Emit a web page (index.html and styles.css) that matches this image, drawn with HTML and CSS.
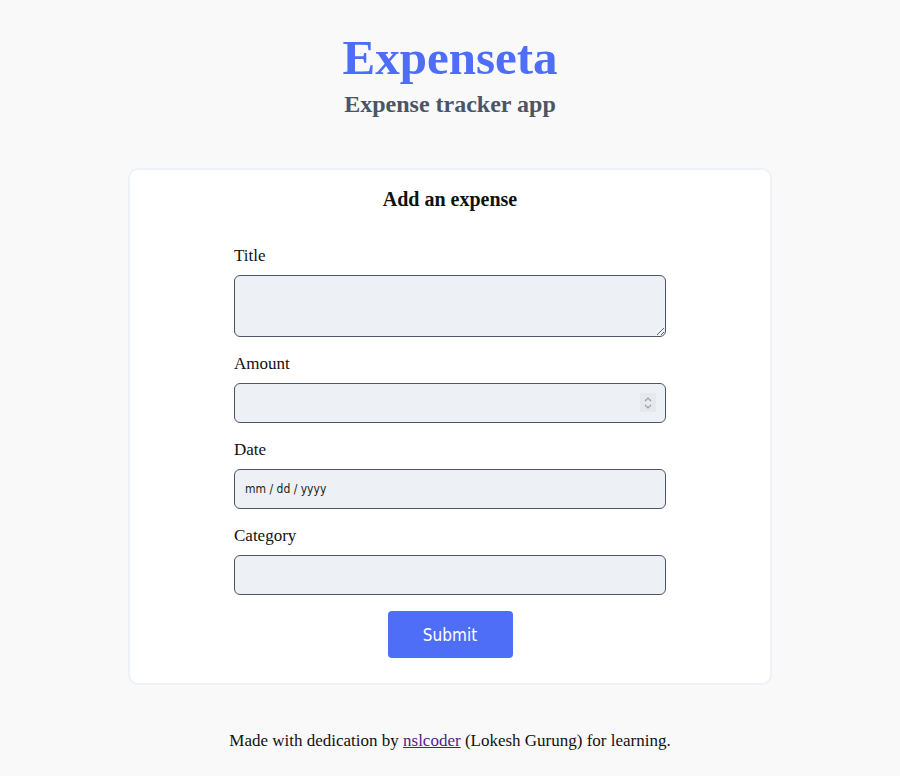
FILE: index.html
```html
<!DOCTYPE html>
<html>
<head>
<meta charset="utf-8">
<link rel="stylesheet" href="styles.css">
</head>
<body>
<header class="header">
  <h1 class="brand">Expenseta</h1>
  <h2 class="tagline">Expense tracker app</h2>
</header>
<main class="card">
  <h3 class="card-title">Add an expense</h3>
  <form class="form">
    <label class="field">
      <span class="label">Title</span>
      <textarea class="input textarea"></textarea>
    </label>
    <label class="field">
      <span class="label">Amount</span>
      <span class="number-wrap">
        <input class="input" type="text" inputmode="decimal">
        <span class="spinner">
          <svg width="14" height="18" viewBox="0 0 14 18"><path d="M4 7 L7 4 L10 7" fill="none" stroke="#9aa0a8" stroke-width="1.2"/><path d="M4 11 L7 14 L10 11" fill="none" stroke="#9aa0a8" stroke-width="1.2"/></svg>
        </span>
      </span>
    </label>
    <label class="field">
      <span class="label">Date</span>
      <input class="input date" type="text" placeholder="mm / dd / yyyy">
    </label>
    <label class="field">
      <span class="label">Category</span>
      <input class="input" type="text">
    </label>
    <div class="actions">
      <button class="submit" type="button">Submit</button>
    </div>
  </form>
</main>
<footer class="footer">
  Made with dedication by <a class="link" href="#">nslcoder</a> (Lokesh Gurung) for learning.
</footer>
</body>
</html>
```

FILE: styles.css
```css
* { box-sizing: border-box; }
html, body { margin: 0; padding: 0; }
body {
  background: #f9f9fa;
  font-family: "Liberation Serif", "DejaVu Serif", serif;
  color: #111;
  padding-top: 29px;
}
.header { text-align: center; }
.brand {
  margin: 0;
  font-size: 49px;
  line-height: 58px;
  color: #4f6ef7;
  font-weight: 700;
}
.tagline {
  margin: 0;
  font-size: 24px;
  line-height: 34px;
  color: #4b5563;
  font-weight: 700;
}
.card {
  width: 640px;
  margin: 49px auto 0;
  background: #fff;
  border-radius: 8px;
  box-shadow: 0 0 0 2px #eef1f6;
  padding: 16px 0 25px;
}
.card-title {
  margin: 0;
  text-align: center;
  font-size: 20px;
  line-height: 26px;
  font-weight: 700;
}
.form {
  width: 432px;
  margin: 33px auto 0;
  display: flex;
  flex-direction: column;
}
.field { display: flex; flex-direction: column; margin-bottom: 16px; }
.label { font-size: 17px; line-height: 22px; margin-bottom: 8px; }
.number-wrap { position: relative; display: block; }
.spinner {
  position: absolute;
  right: 10px;
  top: 10px;
  width: 16px;
  height: 19px;
  background: #e6e8ec;
  display: flex;
  align-items: center;
  justify-content: center;
}
.input {
  width: 432px;
  height: 40px;
  background: #edf1f5;
  border: 1px solid #4b5563;
  border-radius: 6px;
  padding: 0 10px;
  margin: 0;
  display: block;
}
.textarea { height: 62px; resize: vertical; }
.date {
  font-family: "DejaVu Sans Condensed", "DejaVu Sans", sans-serif;
  font-stretch: condensed;
  font-size: 12px;
}
.date::placeholder { color: #1a1a1a; opacity: 1; }
.actions { display: flex; justify-content: center; }
.submit {
  width: 125px;
  height: 47px;
  background: #4f6ef7;
  color: #fff;
  border: none;
  border-radius: 4px;
  font-family: "DejaVu Sans Condensed", "DejaVu Sans", sans-serif;
  font-stretch: condensed;
  font-size: 17px;
  padding: 0;
}
.footer {
  text-align: center;
  margin-top: 48px;
  font-size: 17px;
}
.link { color: #551a8b; }
```
